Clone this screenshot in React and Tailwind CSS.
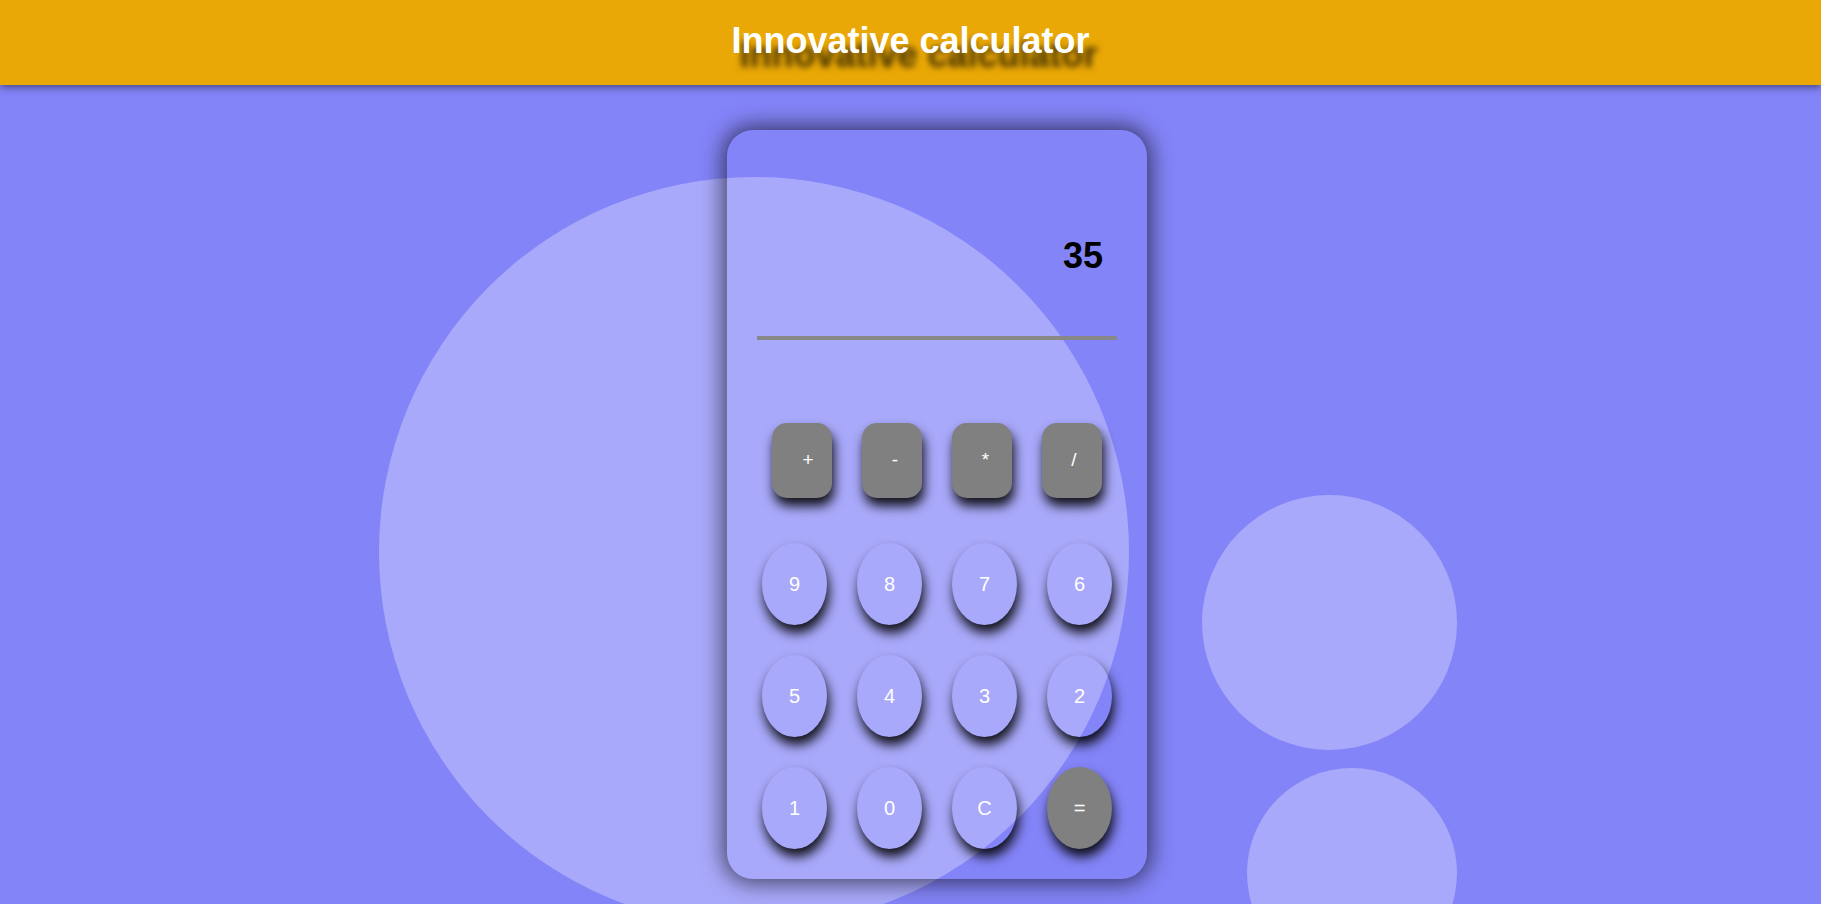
import React from "react";

const ops = [
  { t: "+", pl: "pl-3" },
  { t: "-", pl: "pl-[6px]" },
  { t: "*", pl: "pl-[7px]" },
  { t: "/", pl: "pl-[4px]" },
];

const rows = [
  ["9", "8", "7", "6"],
  ["5", "4", "3", "2"],
  ["1", "0", "C", "="],
];

export default function App() {
  return (
    <div
      className="relative w-full h-[904px] overflow-hidden bg-[#8484f9]"
      style={{ fontFamily: '"Liberation Sans", Arial, sans-serif' }}
    >
      {/* decorative circles */}
      <div className="absolute left-[379px] top-[177px] w-[750px] h-[750px] rounded-full bg-white/30" />
      <div className="absolute left-[1202px] top-[495px] w-[255px] h-[255px] rounded-full bg-white/30" />
      <div className="absolute left-[1247px] top-[768px] w-[210px] h-[210px] rounded-full bg-white/30" />

      <header className="relative z-20 h-[85px] bg-[#eaa806] shadow-[0_2px_8px_rgba(0,0,0,0.5)] flex justify-center pt-[23px]">
        <h1 className="text-[36px] leading-none font-bold text-white [text-shadow:8px_14px_6px_rgba(0,0,0,0.72)]">
          Innovative calculator
        </h1>
      </header>

      <main className="relative z-10 flex justify-center pl-[53px] pt-[45px]">
        <div className="w-[420px] h-[749px] rounded-[26px] shadow-[0_0_22px_4px_rgba(0,0,0,0.6)] flex flex-col items-center">
          <div className="w-[360px] h-[210px] border-b-4 border-[#888888] pt-[108px] pr-[14px] text-right">
            <span className="text-[36px] leading-none font-bold text-black">35</span>
          </div>

          <div className="mt-[83px] flex gap-[30px]">
            {ops.map((o) => (
              <button
                key={o.t}
                className={`w-[60px] h-[75px] rounded-[15px] bg-[#808080] text-white text-[19px] flex items-center justify-center shadow-[2px_8px_12px_rgba(0,0,0,0.9)] ${o.pl}`}
              >
                {o.t}
              </button>
            ))}
          </div>

          <div className="mt-[45px] flex flex-col gap-[30px]">
            {rows.map((r, i) => (
              <div key={i} className="flex gap-[30px]">
                {r.map((k) => (
                  <button
                    key={k}
                    className={`w-[65px] h-[82px] rounded-[50%] text-white text-[20px] flex items-center justify-center shadow-[2px_8px_12px_rgba(0,0,0,0.9)] ${
                      k === "=" ? "bg-[#808080]" : "bg-transparent"
                    }`}
                  >
                    {k}
                  </button>
                ))}
              </div>
            ))}
          </div>
        </div>
      </main>
    </div>
  );
}
